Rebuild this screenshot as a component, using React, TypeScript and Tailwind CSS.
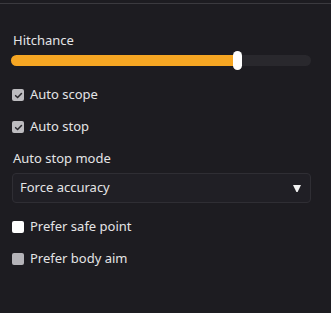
import React from 'react';

function Check({ state }: { state: 'checked' | 'white' | 'gray' }) {
  if (state === 'checked') {
    return (
      <span className="flex h-[12px] w-[12px] items-center justify-center rounded-[2px] bg-[#bdbcc0]">
        <svg width="9" height="9" viewBox="0 0 10 10">
          <path d="M1.8 5.2 L4 7.3 L8.3 2.8" fill="none" stroke="#2a292e" strokeWidth="1.7" strokeLinecap="round" strokeLinejoin="round" />
        </svg>
      </span>
    );
  }
  return <span className={`h-[12px] w-[12px] rounded-[2px] ${state === 'white' ? 'bg-white' : 'bg-[#b4b3b8]'}`} />;
}

function CheckRow({ label, state }: { label: string; state: 'checked' | 'white' | 'gray' }) {
  return (
    <div className="flex h-[20px] items-center gap-[6px] pl-[12px]">
      <Check state={state} />
      <span className="text-[13px] text-[#e4e4e6]">{label}</span>
    </div>
  );
}

export default function App() {
  return (
    <div className="h-[313px] w-[331px] overflow-hidden bg-[#1d1c21]" style={{ fontFamily: '"Noto Sans", "Open Sans", sans-serif' }}>
      <div className="mt-[3px] border-t border-[#3b3a3f]" />
      <div className="flex flex-col">
        <div className="mt-[26px] pl-[13px] text-[13px] leading-[20px] text-[#e4e4e6]">Hitchance</div>
        <div className="relative mx-[11px] mt-[5px] h-[11px] w-[300px] rounded-full bg-[#29282d]">
          <div className="h-full w-[228px] rounded-full bg-[#f6a623]" />
          <div className="absolute left-[222px] top-[-4px] h-[19px] w-[9px] rounded-full bg-white" />
        </div>
        <div className="mt-[19px] flex flex-col gap-[12px]">
          <CheckRow label="Auto scope" state="checked" />
          <CheckRow label="Auto stop" state="checked" />
        </div>
        <div className="mt-[11px] pl-[13px] text-[13px] leading-[20px] text-[#e4e4e6]">Auto stop mode</div>
        <div className="mx-[12px] mt-[5px] flex h-[30px] w-[299px] items-center justify-between rounded-[4px] border border-[#2f2e34] bg-[#201f25] pl-[7px] pr-[9px]">
          <span className="text-[13px] text-[#e4e4e6]">Force accuracy</span>
          <svg width="8" height="7" viewBox="0 0 8 7">
            <path d="M0 0 H8 L4.6 7 H3.4 Z" fill="#f2f2f2" />
          </svg>
        </div>
        <div className="mt-[14px] flex flex-col gap-[12px]">
          <CheckRow label="Prefer safe point" state="white" />
          <CheckRow label="Prefer body aim" state="gray" />
        </div>
      </div>
    </div>
  );
}
